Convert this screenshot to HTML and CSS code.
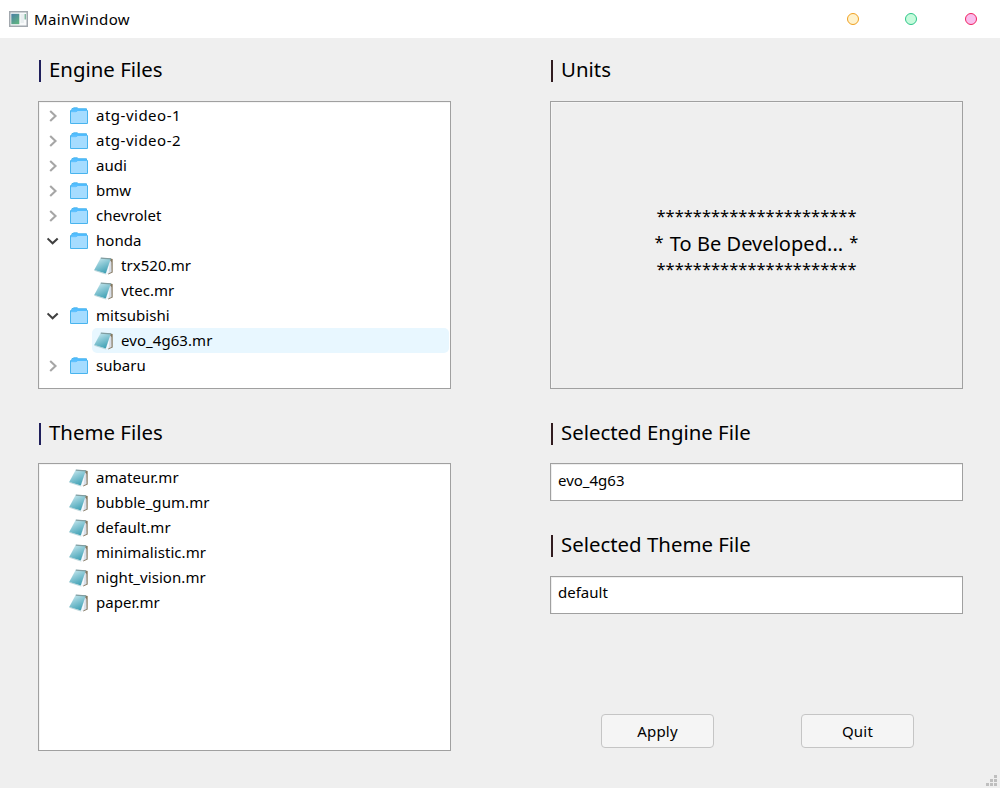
FILE: index.html
```
<!DOCTYPE html>
<html lang="en">
<head>
<meta charset="utf-8">
<title>MainWindow</title>
<link rel="stylesheet" href="styles.css">
</head>
<body>
<svg class="defs" width="0" height="0" aria-hidden="true">
  <defs>
    <linearGradient id="cover" x1="0.1" y1="0" x2="0.6" y2="1">
      <stop offset="0" stop-color="#d3edf2"/><stop offset="0.45" stop-color="#8cc9d6"/><stop offset="1" stop-color="#3fa0b4"/>
    </linearGradient>
    <linearGradient id="app" x1="0" y1="0" x2="0.6" y2="1">
      <stop offset="0" stop-color="#4a7fa5"/><stop offset="1" stop-color="#5fb184"/>
    </linearGradient>
    <symbol id="folder" viewBox="0 0 18 17">
      <path d="M1 5V2.5H2.5V1H7.5L8.5 1.8H16.5V5Z" fill="#52bdff"/>
      <path d="M.5 16.5V3.5H2V1.5H3L3.5 .8H7.5L8.5 1.8H16.5V3.5H17.5V16.5Z" fill="none" stroke="#48b4ee"/>
      <path d="M1 5.5H6L7.5 4H17V16H1Z" fill="#a5dcff"/>
      <path d="M1 3.5H7.5L6 5.5H1Z" fill="#60c2ff"/>
    </symbol>
    <symbol id="file" viewBox="0 0 20 18">
      <path d="M15.5 1.2L18.7 2V15.6L14 17.6Z" fill="#84775f"/>
      <path d="M15.5 2.5L17.4 5L17.6 15L12 17.6Z" fill="#d9dfe8"/>
      <path d="M15.8 4.5L14.6 16.2L11.6 17.3Z" fill="#f5f8fc"/>
      <path d="M6.8 .8L16.8 1.5L11.8 16.6L.2 13Z" fill="url(#cover)"/>
      <path d="M6.8 1.1L17 1.8" stroke="#819da0" stroke-width="1.2"/>
      <path d="M.4 13.3L11.8 17" stroke="#a9cbd2" stroke-width=".8"/>
    </symbol>
    <symbol id="right" viewBox="0 0 12 12"><path d="M3.2 1L8.5 6L3.2 11" fill="none" stroke="#a6a6a6" stroke-width="2.1"/></symbol>
    <symbol id="down" viewBox="0 0 12 12"><path d="M.5 3.4L5.6 8.2L10.7 3.4" fill="none" stroke="#404040" stroke-width="2.1"/></symbol>
  </defs>
</svg>
<div class="window">
  <header class="titlebar">
    <svg class="app-icon" viewBox="0 0 19 16">
      <rect x=".75" y=".75" width="17.5" height="14.5" fill="#f8fafb" stroke="#a2a8ae" stroke-width="1.5"/>
      <rect x="2.3" y="2.8" width="8" height="10.4" fill="url(#app)"/>
      <rect x="11.5" y="3" width="3.5" height="9" fill="#e9eef0"/>
      <rect x="15.6" y="3" width="1.2" height="5.5" fill="#63a98b"/>
    </svg>
    <span class="title">MainWindow</span>
    <span class="dots"><i class="dot minimize"></i><i class="dot maximize"></i><i class="dot close"></i></span>
  </header>
  <main class="content">
    <section class="column">
      <h2 class="heading navy"><span class="bar"></span>Engine Files</h2>
      <ul class="panel tree">
        <li class="row"><svg class="arrow"><use href="#right"/></svg><svg class="folder"><use href="#folder"/></svg><span class="name wide">atg-video-1</span></li>
        <li class="row"><svg class="arrow"><use href="#right"/></svg><svg class="folder"><use href="#folder"/></svg><span class="name wide">atg-video-2</span></li>
        <li class="row"><svg class="arrow"><use href="#right"/></svg><svg class="folder"><use href="#folder"/></svg><span class="name">audi</span></li>
        <li class="row"><svg class="arrow"><use href="#right"/></svg><svg class="folder"><use href="#folder"/></svg><span class="name">bmw</span></li>
        <li class="row"><svg class="arrow"><use href="#right"/></svg><svg class="folder"><use href="#folder"/></svg><span class="name">chevrolet</span></li>
        <li class="row"><svg class="arrow"><use href="#down"/></svg><svg class="folder"><use href="#folder"/></svg><span class="name">honda</span></li>
        <li class="row child"><svg class="file"><use href="#file"/></svg><span class="name">trx520.mr</span></li>
        <li class="row child"><svg class="file"><use href="#file"/></svg><span class="name">vtec.mr</span></li>
        <li class="row"><svg class="arrow"><use href="#down"/></svg><svg class="folder"><use href="#folder"/></svg><span class="name">mitsubishi</span></li>
        <li class="row child selected"><svg class="file"><use href="#file"/></svg><span class="name">evo_4g63.mr</span></li>
        <li class="row"><svg class="arrow"><use href="#right"/></svg><svg class="folder"><use href="#folder"/></svg><span class="name">subaru</span></li>
      </ul>
      <h2 class="heading navy second"><span class="bar"></span>Theme Files</h2>
      <ul class="panel tree">
        <li class="row top"><svg class="file"><use href="#file"/></svg><span class="name">amateur.mr</span></li>
        <li class="row top"><svg class="file"><use href="#file"/></svg><span class="name">bubble_gum.mr</span></li>
        <li class="row top"><svg class="file"><use href="#file"/></svg><span class="name">default.mr</span></li>
        <li class="row top"><svg class="file"><use href="#file"/></svg><span class="name">minimalistic.mr</span></li>
        <li class="row top"><svg class="file"><use href="#file"/></svg><span class="name">night_vision.mr</span></li>
        <li class="row top"><svg class="file"><use href="#file"/></svg><span class="name">paper.mr</span></li>
      </ul>
    </section>
    <section class="column">
      <h2 class="heading"><span class="bar"></span>Units</h2>
      <div class="panel units">
        <div class="stars">**********************</div>
        <div class="pending"><span class="star">*</span><span>To Be Developed...</span><span class="star">*</span></div>
        <div class="stars">**********************</div>
      </div>
      <h2 class="heading second"><span class="bar"></span>Selected Engine File</h2>
      <div class="field">evo_4g63</div>
      <h2 class="heading third"><span class="bar"></span>Selected Theme File</h2>
      <div class="field theme">default</div>
      <div class="actions"><button class="button">Apply</button><button class="button">Quit</button></div>
    </section>
  </main>
  <svg class="grip" viewBox="0 0 11 11"><path d="M8 0h3v3h-3zM4 4h3v3h-3zM8 4h3v3h-3zM0 8h3v3h-3zM4 8h3v3h-3zM8 8h3v3h-3z" fill="#bfbfbf"/></svg>
</div>
</body>
</html>
```
FILE: styles.css
```
* { box-sizing: border-box; }
body { margin: 0; font-family: "Noto Sans", "Open Sans", sans-serif; font-size: 15px; color: #000; }
.defs { position: absolute; }
.window { position: relative; width: 1000px; height: 788px; background: #efefef; overflow: hidden; }
.titlebar { display: flex; align-items: center; height: 38px; padding: 0 23px 0 9px; background: #fff; }
.app-icon { width: 19px; height: 16px; }
.title { margin-left: 6px; line-height: 38px; letter-spacing: .4px; }
.dots { display: flex; margin-left: auto; }
.dot { width: 12px; height: 12px; border: 1px solid; border-radius: 50%; }
.minimize { background: #fff2cc; border-color: #f0a020; }
.maximize { margin-left: 46px; background: #c6fbdc; border-color: #2fc68a; }
.close { margin-left: 48px; background: #f9bdec; border-color: #f02360; }
.content { display: grid; grid-template-columns: 413px 413px; column-gap: 99px; padding: 0 37px 0 38px; }
.column { display: flex; flex-direction: column; }
.heading { display: flex; align-items: center; height: 63px; margin: 0; padding-bottom: 2px; font-size: 20.4px; font-weight: 400; line-height: 28px; white-space: pre; }
.heading.second { height: 74px; padding-top: 14px; }
.heading.third { height: 75px; padding-top: 12px; }
.bar { width: 2px; height: 22px; margin: 4px 8px 0 1px; background: #321c20; }
.navy .bar { background: #20205c; }
.panel { height: 288px; margin: 0; padding: 1px; border: 1px solid #a0a0a0; box-shadow: inset 1px 1px #f5f5f5; }
.tree { background: #fff; list-style: none; }
.row { display: flex; align-items: center; height: 25px; padding-left: 7px; line-height: 25px; }
.name { letter-spacing: .06px; }
.name.wide { letter-spacing: .5px; }
.arrow { width: 12px; height: 12px; margin-top: 1px; }
.folder { width: 18px; height: 17px; margin: 0 8px 0 11px; }
.file { width: 20px; height: 18px; margin: 0 7px 0 0; }
.top { padding-left: 29px; }
.child { margin-left: 52px; padding-left: 2px; }
.selected { background: #e8f7ff; border-radius: 5px; }
.units { display: flex; flex-direction: column; align-items: center; padding: 100px 0 0; font-size: 20px; line-height: 27px; }
.stars { height: 26px; font-size: 16.5px; }
.pending { display: flex; gap: 6px; height: 27px; padding-top: 2px; letter-spacing: .05px; }
.star { font-size: 16.5px; line-height: 23px; }
.field { height: 38px; padding: 0 7px; background: #fff; border: 1px solid #a0a0a0; box-shadow: inset 1px 1px #eee; line-height: 32px; }
.field.theme { line-height: 30px; }
.actions { display: flex; gap: 87px; margin-top: 100px; padding-left: 51px; }
.button { width: 113px; height: 34px; padding: 0; border: 1px solid #c5c5c5; border-radius: 4px; background: #f5f5f5; font: inherit; letter-spacing: .2px; color: #000; }
.grip { position: absolute; right: 3px; bottom: 2px; width: 11px; height: 11px; }
```
